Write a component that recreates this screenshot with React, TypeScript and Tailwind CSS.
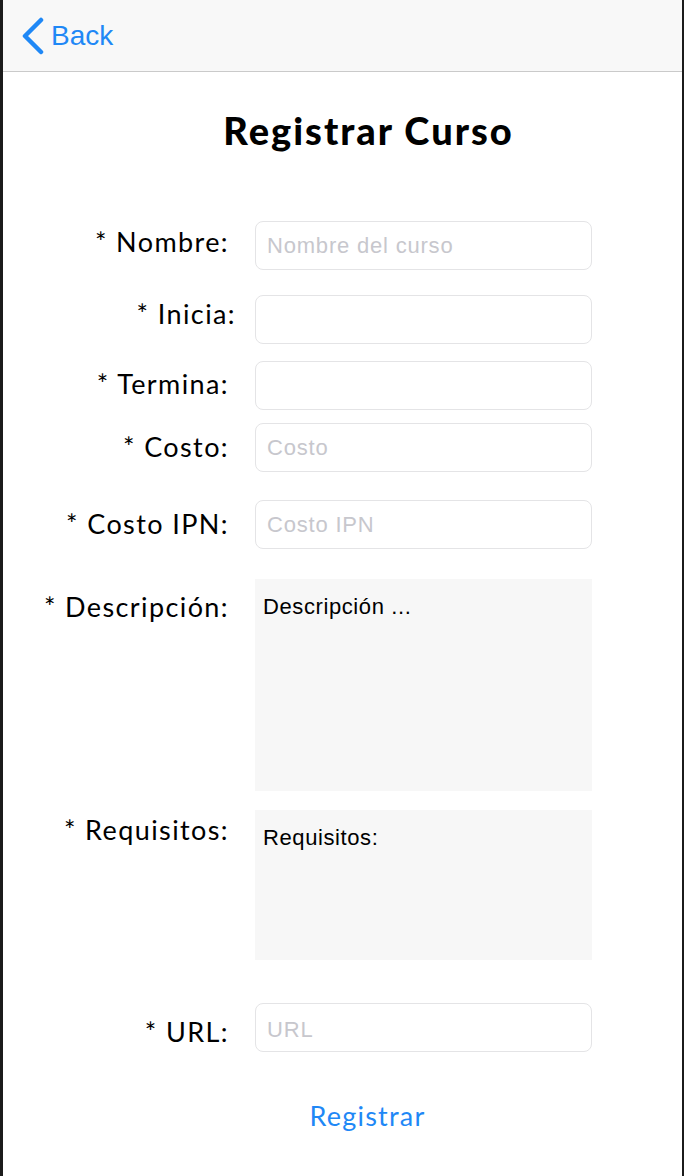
import React from 'react';

const labelFont = { fontFamily: 'Lato, "Open Sans", sans-serif' };

function Field({ label, placeholder, top, pad = 'pr-[8px]' }: { label: string; placeholder?: string; top: string; pad?: string }) {
  return (
    <div className="flex items-start">
      <div className={`w-[234px] shrink-0 text-right text-[27px] leading-[32px] tracking-[1.4px] text-black ${top} ${pad}`} style={labelFont}>
        {label}
      </div>
      <div className="ml-[18px] w-[337px] h-[49px] rounded-[8px] border border-[#e4e4e6] bg-white flex items-center px-[11px]">
        {placeholder && (
          <span className="text-[22px] tracking-[0.8px] text-[#c7c7cd] font-['Liberation_Sans',Arial,sans-serif]">{placeholder}</span>
        )}
      </div>
    </div>
  );
}

export default function App() {
  return (
    <div className="w-[684px] h-[1176px] bg-white border-l-[3px] border-r-[2px] border-[#1b1b1b] overflow-hidden">
      <div className="h-[72px] bg-[#f8f8f8] border-b border-[#cacaca] flex items-center pl-[17px]">
        <svg width="26" height="38" viewBox="0 0 26 38" className="mr-[5px]">
          <path d="M21 3 L5 19 L21 35" fill="none" stroke="#1f88f6" strokeWidth="4.5" strokeLinecap="round" strokeLinejoin="round" />
        </svg>
        <span className="text-[28px] text-[#1f88f6] font-['Liberation_Sans',Arial,sans-serif]">Back</span>
      </div>

      <h1 className="mt-[34px] text-center text-[38px] leading-[48px] font-black tracking-[2px] text-black pl-[52px]" style={labelFont}>
        Registrar Curso
      </h1>

      <div className="mt-[67px] flex flex-col">
        <Field label="* Nombre:" placeholder="Nombre del curso" top="mt-[5px]" />
        <div className="mt-[25px]">
          <Field label="* Inicia:" top="mt-[3px]" pad="pr-[1px]" />
        </div>
        <div className="mt-[17px]">
          <Field label="* Termina:" top="mt-[7px]" />
        </div>
        <div className="mt-[13px]">
          <Field label="* Costo:" placeholder="Costo" top="mt-[8px]" />
        </div>
        <div className="mt-[28px]">
          <Field label="* Costo IPN:" placeholder="Costo IPN" top="mt-[8px]" />
        </div>

        <div className="mt-[30px] flex items-start">
          <div className="w-[234px] shrink-0 text-right text-[27px] leading-[32px] tracking-[1.4px] mt-[12px] pr-[8px]" style={labelFont}>
            * Descripción:
          </div>
          <div className="ml-[18px] w-[337px] h-[212px] bg-[#f7f7f7] px-[8px] pt-[14px]">
            <span className="text-[22px] leading-[28px] tracking-[0.6px] text-black font-['Liberation_Sans',Arial,sans-serif]">Descripción ...</span>
          </div>
        </div>

        <div className="mt-[19px] flex items-start">
          <div className="w-[234px] shrink-0 text-right text-[27px] leading-[32px] tracking-[1.4px] mt-[4px] pr-[8px]" style={labelFont}>
            * Requisitos:
          </div>
          <div className="ml-[18px] w-[337px] h-[150px] bg-[#f7f7f7] px-[8px] pt-[14px]">
            <span className="text-[22px] leading-[28px] tracking-[0.6px] text-black font-['Liberation_Sans',Arial,sans-serif]">Requisitos:</span>
          </div>
        </div>

        <div className="mt-[43px] flex items-start">
          <div className="w-[234px] shrink-0 text-right text-[27px] leading-[32px] tracking-[1.4px] mt-[13px] pr-[8px]" style={labelFont}>
            * URL:
          </div>
          <div className="ml-[18px] w-[337px] h-[49px] rounded-[8px] border border-[#e4e4e6] bg-white flex items-start pt-[9px] px-[11px]">
            <span className="text-[22px] tracking-[0.8px] text-[#c7c7cd] font-['Liberation_Sans',Arial,sans-serif]">URL</span>
          </div>
        </div>

        <div className="mt-[48px] text-center pl-[50px]">
          <button className="text-[27px] leading-[32px] tracking-[1.2px] text-[#1f88f6]" style={labelFont}>Registrar</button>
        </div>
      </div>
    </div>
  );
}
